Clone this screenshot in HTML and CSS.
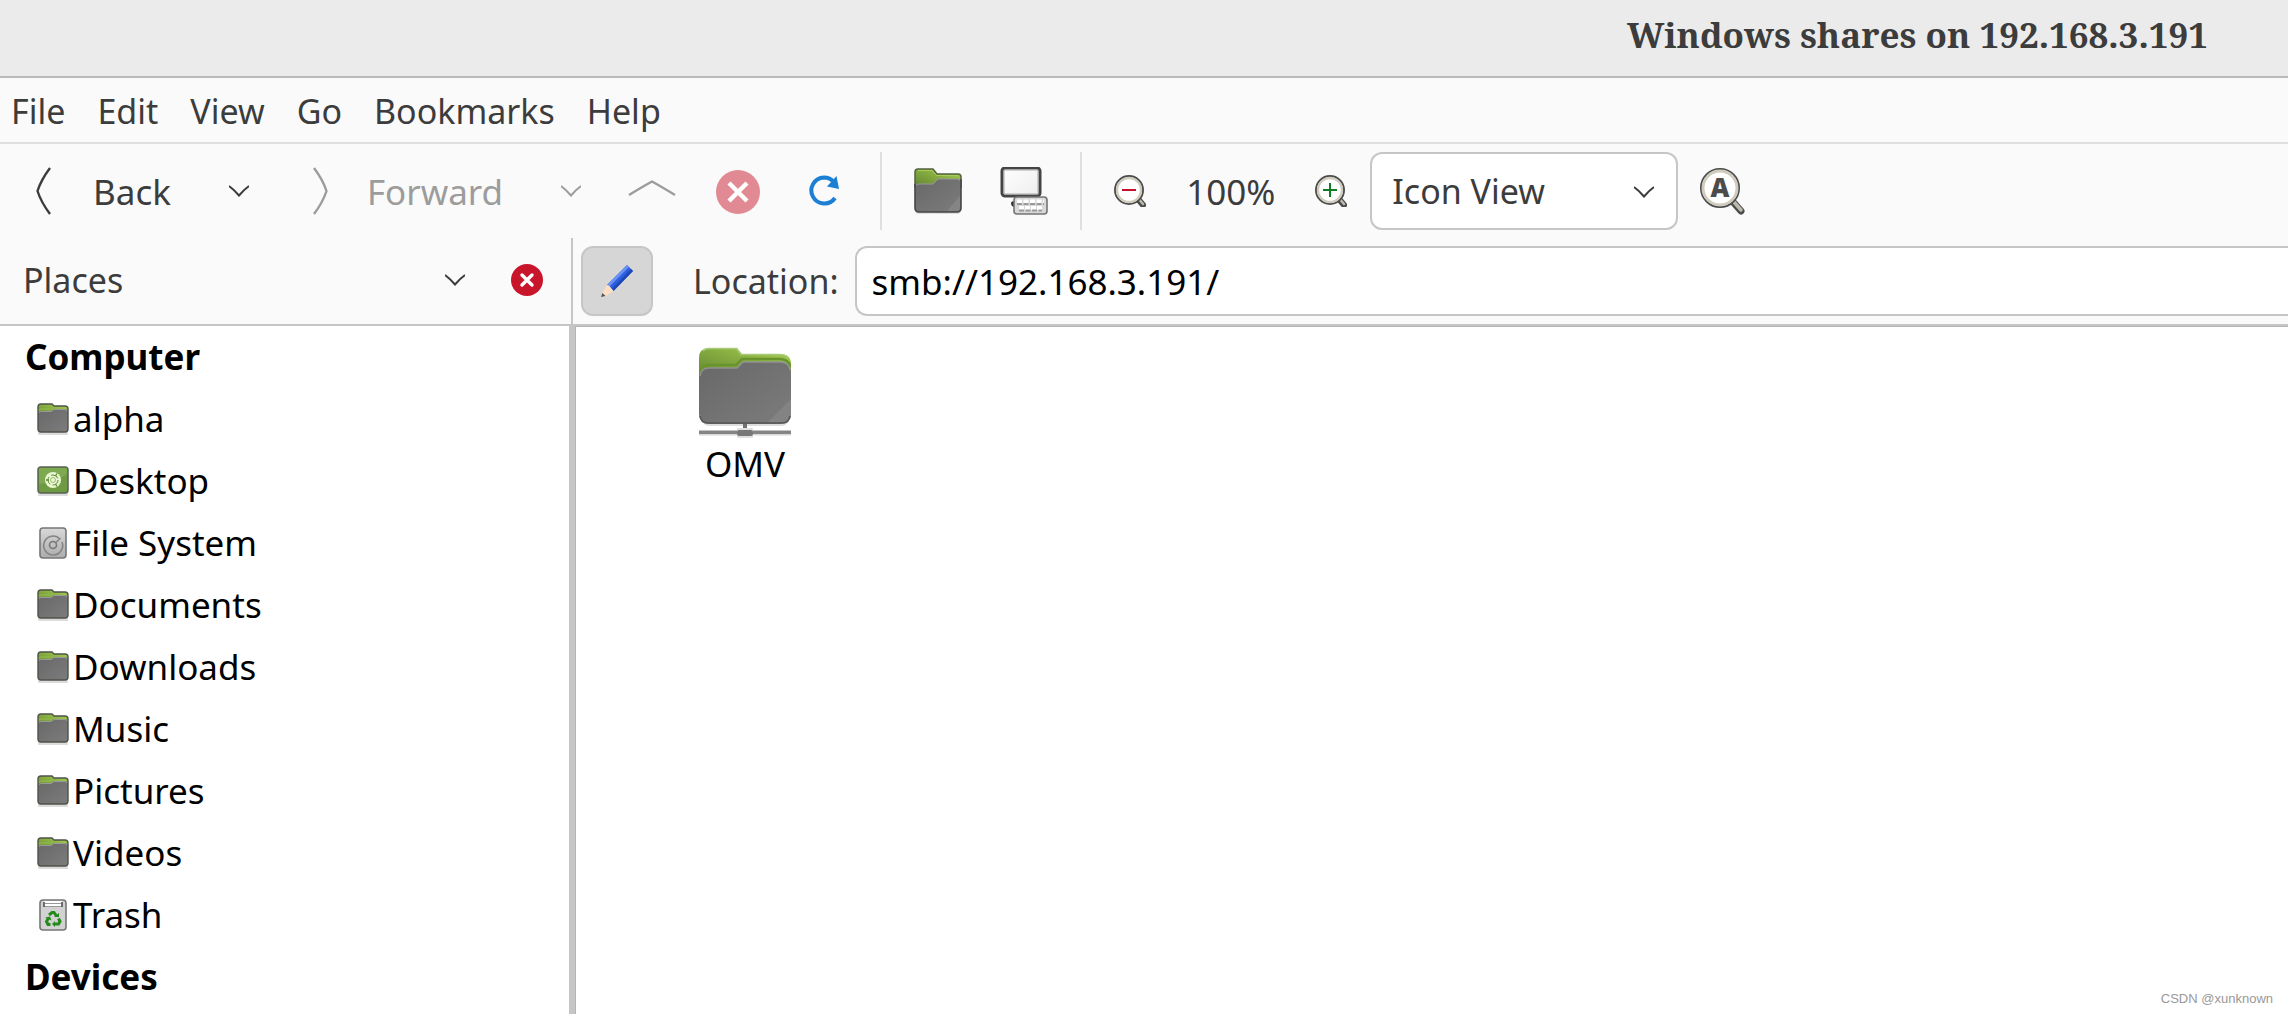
FILE: index.html
```
<!DOCTYPE html>
<html lang="en">
<head>
    <meta charset="utf-8" />
    <meta name="viewport" content="width=device-width, initial-scale=1" />
    <title>Windows shares on 192.168.3.191</title>
    <link rel="stylesheet" href="styles.css">
</head>
<body>
    <!-- shared icons -->
    <svg class="icon-defs" aria-hidden="true">
        <defs>
            <linearGradient id="green" x1="0" y1="1" x2="1" y2="0">
                <stop offset="0" stop-color="#638232" />
                <stop offset="0.5" stop-color="#83aa3f" />
                <stop offset="1" stop-color="#a9d254" />
            </linearGradient>
            <linearGradient id="grey" x1="0" y1="0" x2="1" y2="1">
                <stop offset="0" stop-color="#686868" />
                <stop offset="1" stop-color="#7c7c7c" />
            </linearGradient>
            <linearGradient id="metal" x1="0" y1="0" x2="0" y2="1">
                <stop offset="0" stop-color="#d8d8d8" />
                <stop offset="1" stop-color="#adadad" />
            </linearGradient>
            <linearGradient id="screen" x1="0" y1="0" x2="1" y2="1">
                <stop offset="0" stop-color="#fff" />
                <stop offset="1" stop-color="#ededed" />
            </linearGradient>
        </defs>
        <symbol id="folder" viewBox="0 0 32 32">
            <rect x="1" y="29" width="30" height="3" rx="1" fill="#dcdcdc" />
            <path d="M3 1h12l2 2h11q3 0 3 3v9H1V4q0-3 2-3z" fill="url(#green)" />
            <path d="M2 8q0-2 2-2h11l2-2" fill="none" stroke="#98bd52" />
            <path d="M1 11q0-3 3-3h10l3-2h11q3 0 3 3v17q0 3-3 3H4q-3 0-3-3z" fill="url(#grey)" />
            <path d="M2 10q.5-1.500 2-1.500h10l3-2h11q1.500 0 2 1.500" fill="none" stroke="#9a9a9a" />
            <path d="M4 1h11l2 2h11q3 0 3 3v20q0 3-3 3H4q-3 0-3-3V4q0-3 3-3z" fill="none" stroke="#4f5348" stroke-width="1.400" />
        </symbol>
        <symbol id="chevron" viewBox="0 0 20 12">
            <path d="M0 1Q5 4.500 10 10.500Q15 4.500 20 1" fill="none" stroke="currentColor" stroke-width="2" />
        </symbol>
        <symbol id="lens" viewBox="0 0 32 32">
            <path d="M24 24l5 6" stroke="#4c4c4c" stroke-width="6" stroke-linecap="round" />
            <path d="M24 23l5 6" stroke="#bdbaab" stroke-width="2.500" stroke-linecap="round" />
            <circle cx="15" cy="15" r="14" fill="#fff" stroke="#4c4c4c" stroke-width="2" />
            <circle cx="15" cy="15" r="12" fill="#fff" stroke="#cfcbbd" stroke-width="2.400" />
        </symbol>
    </svg>

    <header class="titlebar">
        <h1>Windows shares on 192.168.3.191</h1>
    </header>

    <nav class="menubar">
        <button>File</button>
        <button>Edit</button>
        <button>View</button>
        <button>Go</button>
        <button>Bookmarks</button>
        <button>Help</button>
    </nav>

    <div class="toolbar">
        <button class="nav-btn">
            <svg width="32" height="48" viewBox="0 0 32 48"><path d="M23 1Q14 13 10.500 24Q14 35 23 47" fill="none" stroke="#3c3c3c" stroke-width="2.400" /></svg>
            <span>Back</span>
        </button>
        <button class="drop-btn" aria-label="Back history"><svg class="chevron"><use href="#chevron" /></svg></button>
        <button class="nav-btn" disabled>
            <svg width="32" height="48" viewBox="0 0 32 48"><path d="M13 1Q22 13 25.500 24Q22 35 13 47" fill="none" stroke="currentColor" stroke-width="2.400" /></svg>
            <span>Forward</span>
        </button>
        <button class="drop-btn" aria-label="Forward history" disabled><svg class="chevron"><use href="#chevron" /></svg></button>
        <div class="tools">
            <button class="tool-btn" aria-label="Up" disabled>
                <svg width="48" height="48" viewBox="0 0 48 48"><path d="M1 28Q14 20 24 14.500Q34 20 47 28" fill="none" stroke="currentColor" stroke-width="2.400" /></svg>
            </button>
            <button class="tool-btn" aria-label="Stop" disabled>
                <svg width="48" height="48" viewBox="0 0 48 48"><circle cx="24" cy="25" r="22" fill="#e18a93" /><path d="M15 16l18 18M33 16L15 34" stroke="#fff" stroke-width="4.500" /></svg>
            </button>
            <button class="tool-btn" aria-label="Reload">
                <svg width="48" height="48" viewBox="0 0 48 48"><path d="M34 15Q30 10.500 24 10.500A13 13 0 1 0 35 31" fill="none" stroke="#1b7fd6" stroke-width="4" /><path d="M36.500 9L39 22L27 19.500z" fill="#1b7fd6" /></svg>
            </button>
            <span class="separator"></span>
            <button class="tool-btn" aria-label="Home">
                <svg width="48" height="48" viewBox="0 0 48 48">
                    <rect x="2" y="43" width="44" height="4" rx="2" fill="#dedede" />
                    <path d="M4 2h15l4 5h21q3 0 3 3v10H1V5q0-3 3-3z" fill="url(#green)" stroke="#53623f" stroke-width="1.500" />
                    <path d="M4 3.500h14.500l4 5H44" fill="none" stroke="#a5cc56" />
                    <path d="M4 17h15l5-5h20q3 0 3 3v26q0 4-4 4H5q-4 0-4-4V20q0-3 3-3z" fill="url(#grey)" />
                    <path d="M2 19q0-2 3-2h14l5-5h20q2 0 2 2" fill="none" stroke="#999" />
                    <path d="M33 44L46 29v11q0 4-4 4z" fill="#858585" />
                    <path d="M1 17v24q0 4 4 4h38q4 0 4-4V12" fill="none" stroke="#464646" stroke-width="1.600" />
                </svg>
            </button>
            <button class="tool-btn" aria-label="Computer">
                <svg width="48" height="48" viewBox="0 0 48 48">
                    <path d="M11 36q0-2 4-2v6q-4 0-4-4z" fill="#333" />
                    <rect x="2" y="1" width="38" height="28" rx="3" fill="url(#screen)" stroke="#444" stroke-width="3" />
                    <path d="M4 3h34v24H4z" fill="none" stroke="#a8a8a8" />
                    <rect x="14" y="30" width="33" height="17" rx="3" fill="#d8d8d8" stroke="#747474" stroke-width="1.600" />
                    <path d="M17 34.500h27" stroke="#fff" stroke-width="4" stroke-dasharray="5 1.500" />
                    <path d="M19 41h23" stroke="#fff" stroke-width="4" stroke-dasharray="5 1" />
                    <path d="M17 37h27M19 43.500h23" stroke="#999" stroke-width="1.800" stroke-dasharray="5 1.500" />
                </svg>
            </button>
            <span class="separator"></span>
            <button class="tool-btn" aria-label="Zoom out">
                <svg width="32" height="32" viewBox="0 0 32 32"><use href="#lens" /><path d="M8 15h14" stroke="#c4122c" stroke-width="2" /></svg>
            </button>
            <span class="zoom-level">100%</span>
            <button class="tool-btn" aria-label="Zoom in">
                <svg width="32" height="32" viewBox="0 0 32 32"><use href="#lens" /><path d="M8 15h14M15 8v14" stroke="#0f7d22" stroke-width="2" /></svg>
            </button>
            <div class="view-select">
                <select aria-label="View as">
                    <option>Icon View</option>
                    <option>List View</option>
                    <option>Compact View</option>
                </select>
                <svg class="chevron"><use href="#chevron" /></svg>
            </div>
            <button class="search-btn" aria-label="Search">
                <svg width="48" height="48" viewBox="0 0 48 48">
                    <path d="M36 36l7 8" stroke="#4c4c4c" stroke-width="7" stroke-linecap="round" />
                    <path d="M36 35l7 8" stroke="#bdbaab" stroke-width="3.500" stroke-linecap="round" />
                    <circle cx="22" cy="21" r="19" fill="#fff" stroke="#4c4c4c" stroke-width="2" />
                    <circle cx="22" cy="21" r="17" fill="#fff" stroke="#cfcbbd" stroke-width="3" />
                    <text class="lens-letter" x="22" y="30" text-anchor="middle">A</text>
                </svg>
            </button>
        </div>
    </div>

    <div class="pathbar">
        <div class="places-head">
            <button class="places-btn">
                <span>Places</span>
                <svg class="chevron"><use href="#chevron" /></svg>
            </button>
            <button class="close-btn" aria-label="Close side pane">
                <svg width="32" height="32" viewBox="0 0 32 32"><circle cx="16" cy="16" r="16" fill="#c9152b" /><path d="M11 11l10 10M21 11L11 21" stroke="#fff" stroke-width="3.400" stroke-linecap="round" /></svg>
            </button>
        </div>
        <form class="location">
            <button class="edit-btn" type="button" aria-label="Edit location">
                <svg width="32" height="32" viewBox="0 0 32 32">
                    <path d="M26 0l6 6L12.500 26L6 20z" fill="#2d5fe0" />
                    <path d="M26 0l2 2L8 22l-2-2z" fill="#6a92f2" />
                    <path d="M30 4l2 2L12.500 26l-2-2z" fill="#1f47b5" />
                    <path d="M6 20l2.500 1L10 23l2.500 3L4 31.500L1 28.500z" fill="#fddfc4" />
                    <path d="M1.500 28l3 3L0 32z" fill="#5a544e" />
                </svg>
            </button>
            <label for="location">Location:</label>
            <input id="location" type="text" value="smb://192.168.3.191/" />
        </form>
    </div>

    <div class="panes">
        <aside class="sidebar">
            <h2>Computer</h2>
            <ul>
                <li><a href="#"><svg><use href="#folder" /></svg>alpha</a></li>
                <li><a href="#">
                    <svg viewBox="0 0 32 32">
                        <rect x="1" y="28" width="30" height="3" rx="1" fill="#ddd" />
                        <rect x="1" y="2" width="30" height="26" rx="3" fill="#6f9a44" stroke="#5a6252" stroke-width="1.500" />
                        <path d="M2 19Q18 18 30 9V4q0-1-1-1H3Q2 3 2 4z" fill="#7daa50" />
                        <circle cx="16" cy="15" r="8" fill="#e9f6cf" />
                        <circle cx="16" cy="15" r="5" fill="none" stroke="#5c8a35" stroke-dasharray="8 2.500" />
                        <path d="M9 15h3M18.500 11l1.500-2.500M18.500 19l1.500 2.500" stroke="#5c8a35" stroke-width="1.300" />
                        <circle cx="16" cy="15" r="2.500" fill="none" stroke="#8db068" stroke-width=".8" />
                    </svg>Desktop</a></li>
                <li><a href="#">
                    <svg viewBox="0 0 32 32">
                        <rect x="3" y="1" width="26" height="30" rx="3" fill="url(#metal)" stroke="#777" stroke-width="1.600" />
                        <path d="M22 11A9.500 9.500 0 1 0 25 15M19 15.500L23.500 11" fill="none" stroke="#858585" stroke-width="1.600" />
                        <circle cx="16" cy="18" r="3.500" fill="none" stroke="#777" stroke-width="1.600" />
                    </svg>File System</a></li>
                <li><a href="#"><svg><use href="#folder" /></svg>Documents</a></li>
                <li><a href="#"><svg><use href="#folder" /></svg>Downloads</a></li>
                <li><a href="#"><svg><use href="#folder" /></svg>Music</a></li>
                <li><a href="#"><svg><use href="#folder" /></svg>Pictures</a></li>
                <li><a href="#"><svg><use href="#folder" /></svg>Videos</a></li>
                <li><a href="#">
                    <svg viewBox="0 0 32 32">
                        <rect x="3" y="1" width="26" height="30" rx="3" fill="#d2d2d2" stroke="#777" stroke-width="1.600" />
                        <path d="M7 2h18v5H7z" fill="#fff" />
                        <path d="M7 3v5M25 3v5" stroke="#444" stroke-width="1.500" />
                        <path d="M8 4.500h16M8 7.500h16" stroke="#999" />
                        <path d="M12 16l3-2.500h2L19.500 17M21.500 19.500l1.500 3-1.500 2.500h-4M13.500 25.500H11L9.500 22.500 11.500 19" fill="none" stroke="#258a1c" stroke-width="3" />
                        <path d="M17 18h5v-4zM18 22v6l-3-3zM8 18.500l5-1 1.500 4z" fill="#258a1c" />
                    </svg>Trash</a></li>
            </ul>
            <h2>Devices</h2>
        </aside>
        <main class="files">
            <a class="file" href="#">
                <svg width="92" height="92" viewBox="0 0 92 92">
                    <path d="M10 2h28l5 6h38q11 0 11 10v16H0V12Q0 2 10 2z" fill="url(#green)" />
                    <path d="M4 5q2-2.500 6-2.500h27.500l4.500 6h38q6 0 9 3" fill="none" stroke="#a7c978" stroke-width="1.500" />
                    <path d="M1 26q2-7 9-7h27l6-6h38q8 0 11 8" fill="none" stroke="#68932d" stroke-width="2.500" />
                    <path d="M4 76q2 4 6 4h72q5 0 7-4z" fill="#ddd" />
                    <path d="M10 22h28l6-6h37q11 0 11 11v41q0 10-10 10H10Q0 78 0 68V32q0-10 10-10z" fill="url(#grey)" />
                    <path d="M68 77L92 53v15q0 9-10 9z" fill="#838383" />
                    <path d="M1 30q1-8 9-8h28l6-6h37q9 0 10 8" fill="none" stroke="#919191" stroke-width="1.500" />
                    <path d="M1 70q1 7 9 7h72q8 0 9-7" fill="none" stroke="#555" stroke-width="1.500" />
                    <path d="M44 78h4v7h-4z" fill="#707070" />
                    <path d="M0 84.500h92v3.500H0z" fill="#858585" />
                    <path d="M0 88h92v1.500H0z" fill="#d8d8d8" />
                    <rect x="38" y="82" width="16" height="10" rx="1" fill="#e0e0e0" />
                    <rect x="38" y="84" width="16" height="6" rx="2" fill="#777" />
                </svg>
                <span>OMV</span>
            </a>
            <span class="credit">CSDN @xunknown</span>
        </main>
    </div>
</body>
</html>
```

FILE: styles.css
```
* {
    box-sizing: border-box;
}

body {
    margin: 0;
    height: 100vh;
    display: flex;
    flex-direction: column;
    overflow: hidden;
    background: #fafafa;
    color: #3c3c3c;
    font-family: 'Noto Sans', 'Open Sans', sans-serif;
    font-size: 34px;
}

button,
input,
select {
    margin: 0;
    padding: 0;
    border: none;
    background: none;
    color: inherit;
    font: inherit;
}

button:disabled {
    color: #9c9c9c;
}

svg {
    display: block;
    flex: none;
}

a {
    color: #000;
    text-decoration: none;
}

.icon-defs {
    position: absolute;
    width: 0;
    height: 0;
}

.chevron {
    width: 20px;
    height: 12px;
}

.titlebar {
    padding: 0 80px 6px;
    background: #ebebeb;
    border-bottom: 2px solid #b9b9b9;
}

.titlebar h1 {
    margin: 0;
    text-align: right;
    font-family: 'Noto Serif', 'DejaVu Serif', serif;
    font-size: 35px;
    font-weight: bold;
    line-height: 70px;
}

.menubar {
    display: flex;
    gap: 32px;
    padding: 2px 11px 0;
    border-bottom: 2px solid #dfdfdf;
}

.menubar button {
    line-height: 62px;
}

.toolbar {
    display: flex;
    align-items: center;
    padding: 8px 27px;
    font-size: 35px;
}

.nav-btn {
    display: flex;
    align-items: center;
    gap: 34px;
}

.drop-btn {
    padding: 0 52px 0 58px;
}

.drop-btn:disabled {
    padding-right: 28px;
}

.tools {
    display: flex;
    align-items: center;
}

.tool-btn {
    padding: 0 19px;
}

.separator {
    width: 2px;
    height: 78px;
    margin: 0 13px;
    background: #dfdfdf;
}

.zoom-level {
    padding: 0 21px;
}

.view-select {
    position: relative;
    margin: 0 20px 0 4px;
    font-size: 34px;
}

.view-select select {
    appearance: none;
    display: block;
    width: 308px;
    height: 78px;
    padding: 0 20px;
    border: 2px solid #c6c6c6;
    border-radius: 12px;
    background: #fff;
}

.view-select .chevron {
    position: absolute;
    right: 24px;
    top: 34px;
    pointer-events: none;
}

.lens-letter {
    font-size: 26px;
    font-weight: 900;
    fill: #4c4c4c;
}

.pathbar {
    display: flex;
    height: 88px;
    border-bottom: 2px solid #c6c6c6;
}

.places-head {
    display: flex;
    align-items: center;
    width: 571px;
    padding: 0 28px 2px 23px;
}

.places-btn {
    flex: 1;
    display: flex;
    align-items: center;
    justify-content: space-between;
    padding-right: 46px;
}

.location {
    flex: 1;
    display: flex;
    align-items: center;
    padding-left: 8px;
    border-left: 2px solid #c6c6c6;
    overflow: hidden;
}

.edit-btn {
    display: flex;
    align-items: center;
    justify-content: center;
    width: 72px;
    height: 70px;
    border: 2px solid #c6c6c6;
    border-radius: 12px;
    background: #d6d6d6;
}

.location label {
    padding: 0 16px 0 40px;
}

.location input {
    flex: 1;
    height: 70px;
    padding: 0 15px;
    border: 2px solid #c6c6c6;
    border-right: none;
    border-radius: 12px 0 0 12px;
    background: #fff;
    color: #000;
    font-size: 35px;
}

.panes {
    flex: 1;
    display: flex;
    min-height: 0;
    background: #fff;
    color: #000;
    font-size: 35px;
}

.sidebar {
    width: 575px;
    border-right: 6px solid #c6c6c6;
    overflow: hidden;
}

.sidebar h2 {
    margin: 0;
    padding-left: 25px;
    font-size: 35px;
    font-weight: bold;
    line-height: 62px;
}

.sidebar ul {
    margin: 0;
    padding: 0;
    list-style: none;
}

.sidebar a {
    display: flex;
    align-items: center;
    gap: 4px;
    padding-left: 37px;
    line-height: 62px;
}

.sidebar svg {
    width: 32px;
    height: 32px;
}

.files {
    flex: 1;
    position: relative;
    padding: 19px 123px;
    border-top: 1px solid #b5b5b5;
    border-left: 1px solid #b5b5b5;
}

.file {
    display: inline-flex;
    flex-direction: column;
    align-items: center;
    line-height: 52px;
}

.credit {
    position: absolute;
    right: 15px;
    bottom: 7px;
    color: #999;
    font-family: 'Liberation Sans', Arial, sans-serif;
    font-size: 13px;
    line-height: 16px;
}
```
